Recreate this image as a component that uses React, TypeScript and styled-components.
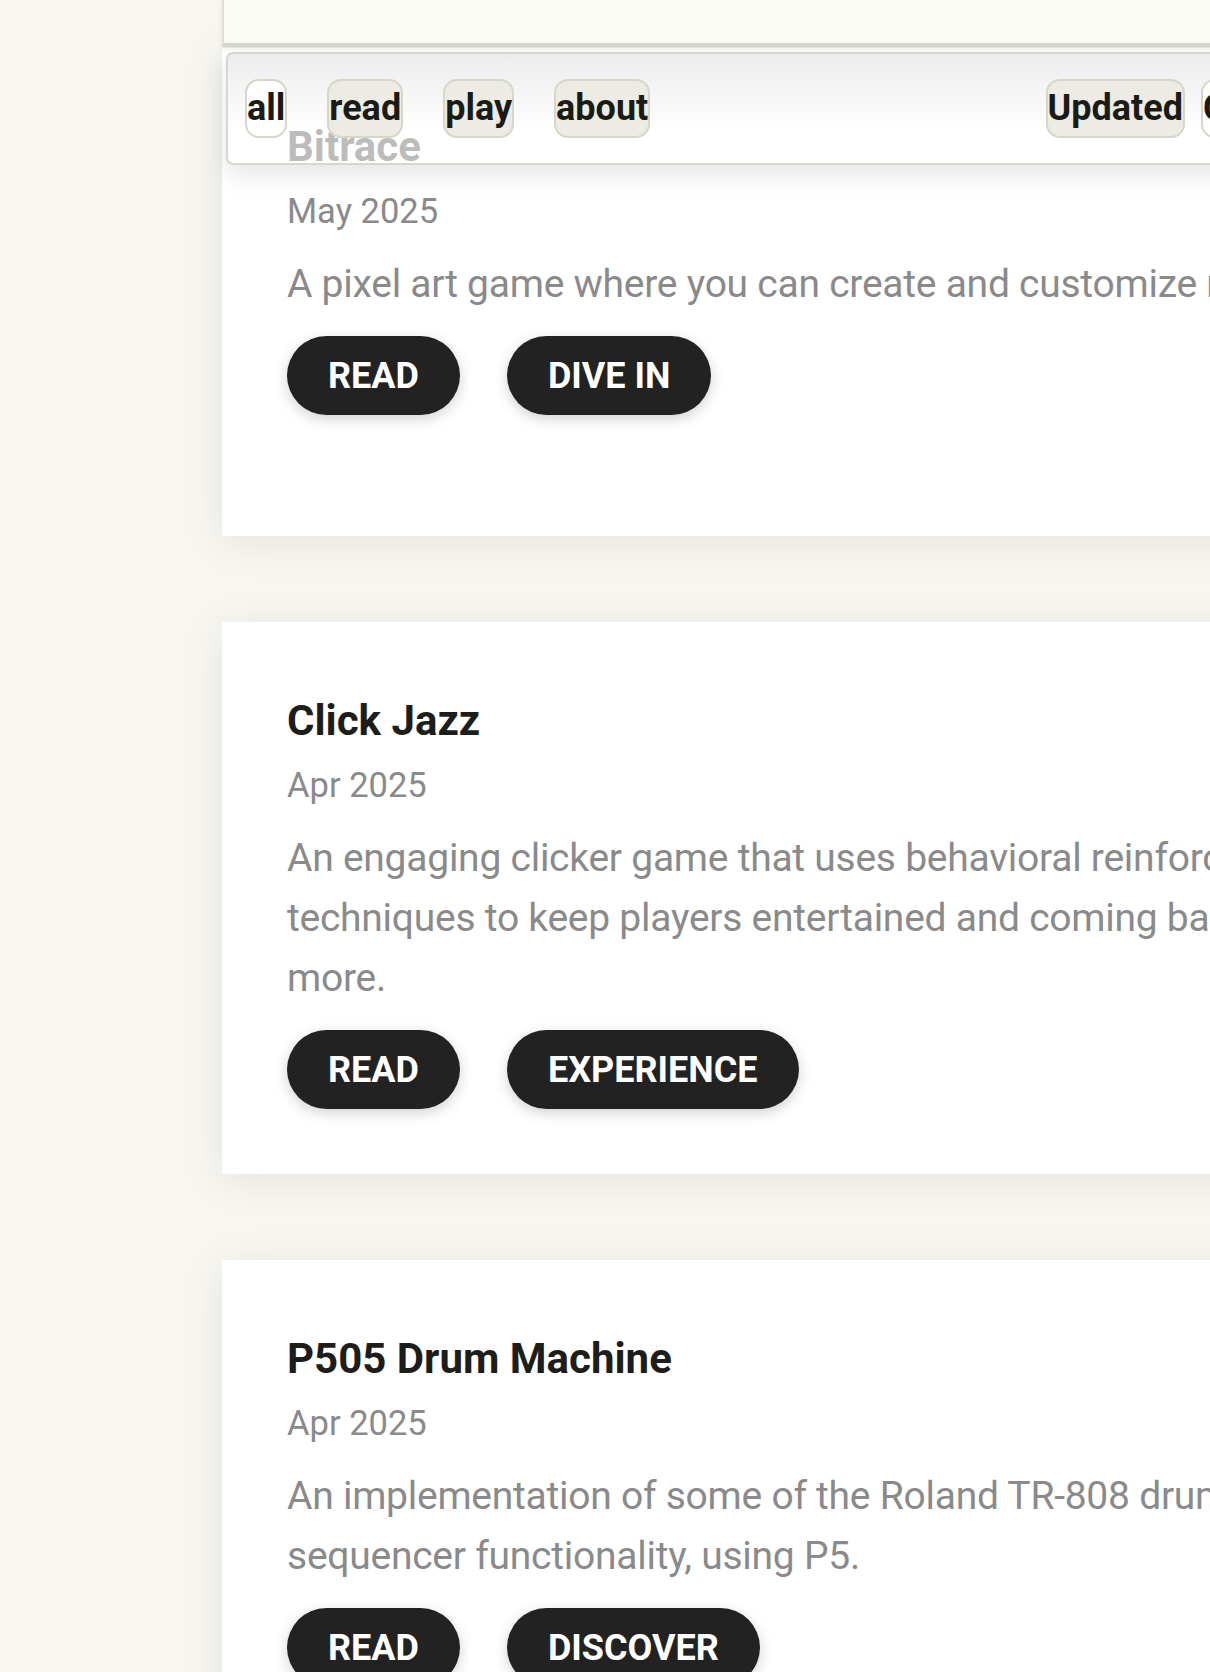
import React from "react";
import styled, { createGlobalStyle } from "styled-components";

const GlobalStyle = createGlobalStyle`
  html, body {
    margin: 0;
    padding: 0;
    overflow: hidden;
    background: #f7f6f1;
  }
  * { box-sizing: border-box; }
`;

const Page = styled.div`
  height: 1672px;
  overflow: hidden;
  background: #f7f6f1;
  padding-left: 222px;
  font-family: Roboto, "Liberation Sans", Arial, sans-serif;
`;

const Column = styled.div`
  position: relative;
  width: 1255px;
`;

const TopArea = styled.div`
  position: absolute;
  top: 0;
  left: 0;
  right: 0;
  z-index: 2;
  display: flex;
  flex-direction: column;
  gap: 5px;
`;

const HeaderStrip = styled.div`
  height: 47px;
  background: #fbfbf6;
  border-left: 2px solid #e0e0d7;
  border-bottom: 4px solid #d5d5ca;
  box-shadow: 0 2px 6px rgba(0, 0, 0, 0.07);
`;

const Toolbar = styled.nav`
  margin-left: 4px;
  width: 1125px;
  height: 113px;
  border: 2px solid #d7d7cc;
  border-radius: 7px;
  background: linear-gradient(
    rgba(228, 228, 228, 0.7),
    rgba(255, 255, 255, 0.7) 70%
  );
  box-shadow: 0 10px 24px rgba(0, 0, 0, 0.1);
  padding: 0 17px;
  display: flex;
  align-items: center;
  justify-content: space-between;
`;

const ChipGroup = styled.div<{ $gap: number }>`
  display: flex;
  align-items: center;
  gap: ${(p) => p.$gap}px;
`;

const Chip = styled.button<{ $active?: boolean }>`
  height: 59px;
  padding: 0;
  border: 2px solid #d6d6c9;
  border-radius: 14px;
  background: ${(p) => (p.$active ? "#ffffff" : "#ecebe4")};
  color: #1b1b16;
  font-family: Roboto, "Liberation Sans", Arial, sans-serif;
  font-size: 36px;
  font-weight: 700;
  line-height: 55px;
  cursor: pointer;
`;

const CardList = styled.div`
  padding-top: 48px;
  display: flex;
  flex-direction: column;
  gap: 86px;
`;

const Card = styled.article`
  background: #ffffff;
  min-height: 488px;
  padding: 74px 65px 65px;
  box-shadow: 0 6px 40px rgba(0, 0, 0, 0.08);
  display: flex;
  flex-direction: column;
`;

const Title = styled.h2`
  margin: 0 0 19px;
  font-size: 42px;
  font-weight: 700;
  line-height: normal;
  color: #1d1d1a;
`;

const DateLine = styled.div`
  margin-bottom: 22px;
  font-size: 34.5px;
  line-height: 42px;
  color: #8a8a8a;
`;

const Description = styled.p`
  margin: 0 0 22px;
  font-size: 39px;
  letter-spacing: -0.25px;
  line-height: 60px;
  color: #8a8a8a;
`;

const ButtonRow = styled.div`
  display: flex;
  gap: 47px;
`;

const PillButton = styled.a`
  display: inline-flex;
  align-items: center;
  height: 79px;
  padding: 0 41px;
  border-radius: 40px;
  background: #222222;
  color: #ffffff;
  font-size: 36px;
  font-weight: 700;
  text-transform: uppercase;
  text-decoration: none;
  box-shadow: 0 4px 14px rgba(0, 0, 0, 0.18);
`;

type Project = {
  title: string;
  date: string;
  description: string;
  action: string;
};

const projects: Project[] = [
  {
    title: "Bitrace",
    date: "May 2025",
    description:
      "A pixel art game where you can create and customize racers.",
    action: "Dive in",
  },
  {
    title: "Click Jazz",
    date: "Apr 2025",
    description:
      "An engaging clicker game that uses behavioral reinforcement techniques to keep players entertained and coming back for more.",
    action: "Experience",
  },
  {
    title: "P505 Drum Machine",
    date: "Apr 2025",
    description:
      "An implementation of some of the Roland TR-808 drum machine's sequencer functionality, using P5.",
    action: "Discover",
  },
];

export default function App() {
  return (
    <>
      <GlobalStyle />
      <Page>
        <Column>
          <TopArea>
            <HeaderStrip />
            <Toolbar>
              <ChipGroup $gap={40}>
                <Chip $active>all</Chip>
                <Chip>read</Chip>
                <Chip>play</Chip>
                <Chip>about</Chip>
              </ChipGroup>
              <ChipGroup $gap={16}>
                <Chip>Updated</Chip>
                <Chip $active>Created</Chip>
              </ChipGroup>
            </Toolbar>
          </TopArea>
          <CardList>
            {projects.map((p) => (
              <Card key={p.title}>
                <Title>{p.title}</Title>
                <DateLine>{p.date}</DateLine>
                <Description>{p.description}</Description>
                <ButtonRow>
                  <PillButton href="#">Read</PillButton>
                  <PillButton href="#">{p.action}</PillButton>
                </ButtonRow>
              </Card>
            ))}
          </CardList>
        </Column>
      </Page>
    </>
  );
}
